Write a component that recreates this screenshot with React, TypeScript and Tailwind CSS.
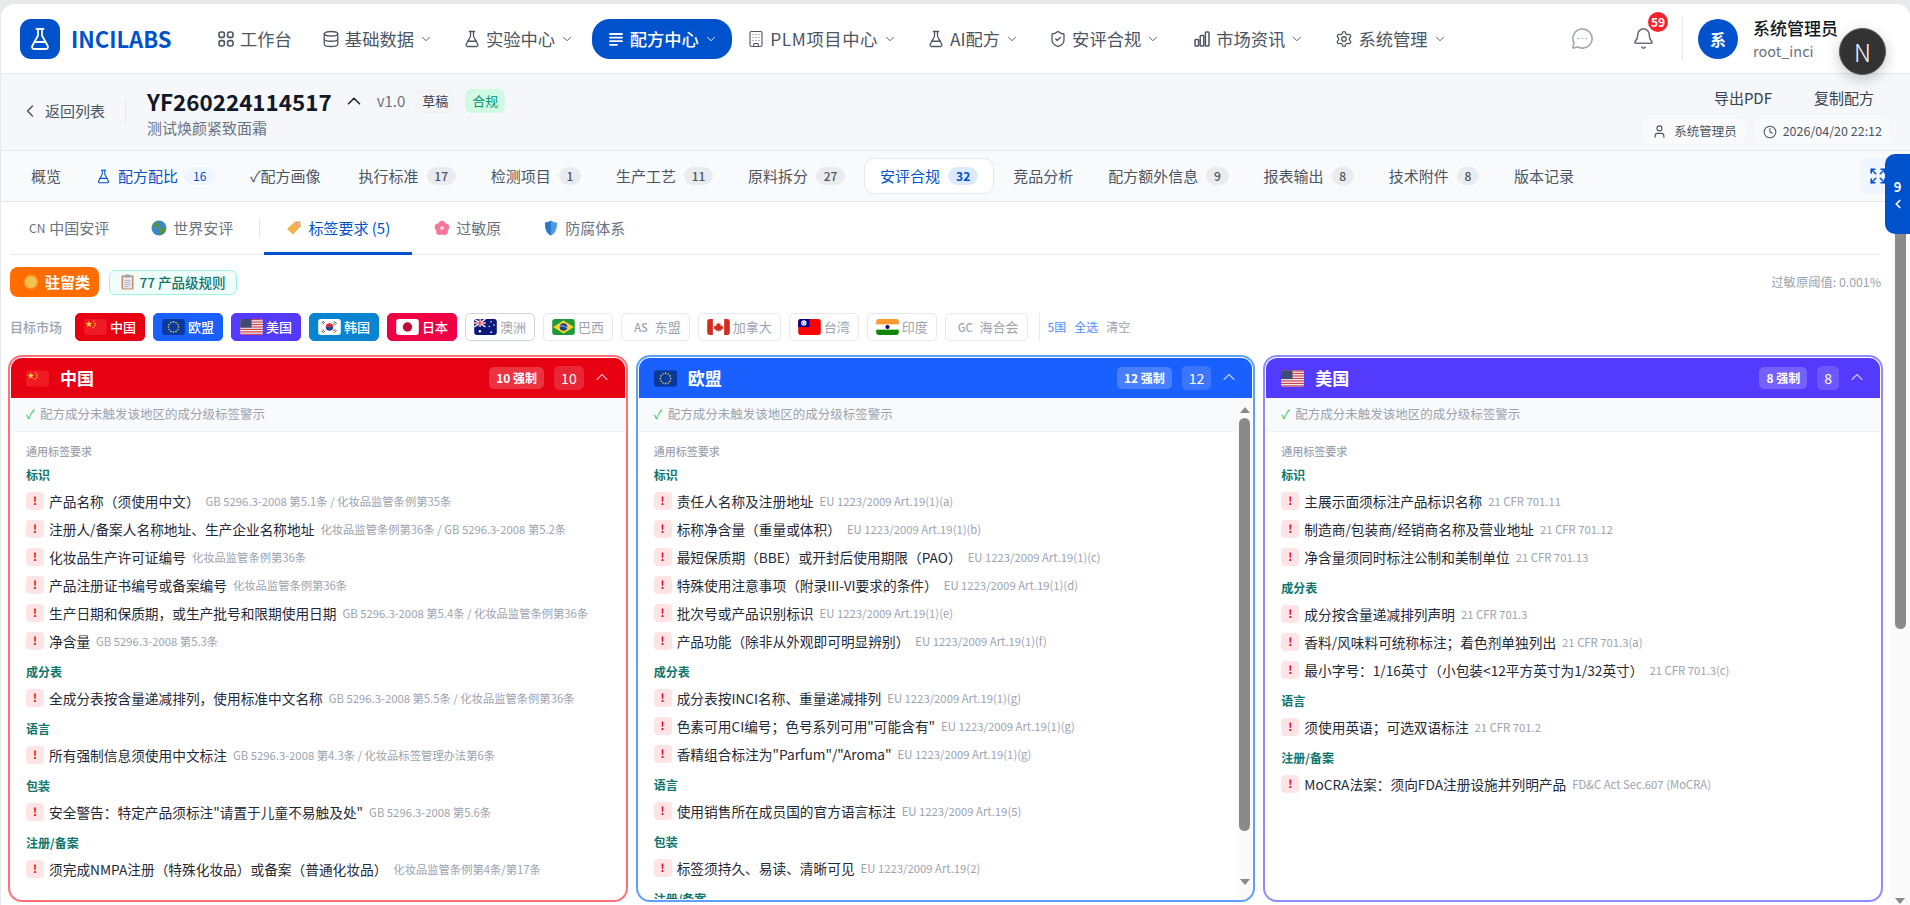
import { useState, type ReactNode } from "react";
import {
  Bell,
  Building,
  ChevronDown,
  ChevronLeft,
  ChevronUp,
  Clock,
  Database,
  Expand,
  FlaskConical,
  MessageCircleMore,
  Settings,
  ShieldCheck,
  User,
} from "lucide-react";

// small inline glyphs that the icon package has no close match for
function GridIcon() {
  return (
    <svg width="18" height="18" viewBox="0 0 18 18" fill="none" stroke="currentColor" strokeWidth="1.6">
      <rect x="2" y="2" width="5.4" height="5.4" rx="2" />
      <rect x="10.6" y="2" width="5.4" height="5.4" rx="2" />
      <rect x="2" y="10.6" width="5.4" height="5.4" rx="2" />
      <rect x="10.6" y="10.6" width="5.4" height="5.4" rx="2" />
    </svg>
  );
}

function LinesIcon() {
  return (
    <svg width="18" height="18" viewBox="0 0 18 18" fill="none" stroke="currentColor" strokeWidth="1.8" strokeLinecap="round">
      <path d="M3 4h12M3 7.6h12M3 11.2h12M3 14.8h7" />
    </svg>
  );
}

function BarsIcon() {
  return (
    <svg width="18" height="18" viewBox="0 0 18 18" fill="none" stroke="currentColor" strokeWidth="1.5" strokeLinejoin="round">
      <rect x="2" y="9.5" width="3.6" height="6.5" rx="0.8" />
      <rect x="7.2" y="5.5" width="3.6" height="10.5" rx="0.8" />
      <rect x="12.4" y="2" width="3.6" height="14" rx="0.8" />
    </svg>
  );
}

function Globe() {
  return (
    <svg width="16" height="16" viewBox="0 0 16 16">
      <circle cx="8" cy="8" r="7.5" fill="#3b88c3" />
      <path d="M3 3.5c2-1.5 4-1 5 0s0 2-1 2.5-1 2-2.5 2S2 5 3 3.5zM9 8c2-1 4-.5 5.5 1-.5 3-2.5 5-5 5.5C8 13 9.500 10 9 8z" fill="#5c913b" />
    </svg>
  );
}

function TagEmoji() {
  return (
    <svg width="16" height="16" viewBox="0 0 16 16">
      <path d="M9 1.500l5.200-.3.600 5.300-7.800 8L1 9z" fill="#f4b24d" />
      <circle cx="11.800" cy="4" r="1.500" fill="#fff" stroke="#e0736b" strokeWidth="0.8" />
    </svg>
  );
}

function FlowerEmoji() {
  return (
    <svg width="16" height="16" viewBox="0 0 16 16">
      <g fill="#f4789b">
        <circle cx="8" cy="4.200" r="3.500" />
        <circle cx="4.200" cy="7" r="3.500" />
        <circle cx="11.800" cy="7" r="3.500" />
        <circle cx="5.600" cy="11.500" r="3.500" />
        <circle cx="10.400" cy="11.500" r="3.500" />
      </g>
      <circle cx="8" cy="8" r="1.800" fill="#fde4ec" />
    </svg>
  );
}

function ShieldEmoji() {
  return (
    <svg width="16" height="16" viewBox="0 0 16 16">
      <path d="M8 .5c2 1.500 4 2 6 2 0 6-1 10.500-6 13-5-2.500-6-7-6-13 2 0 4-.5 6-2z" fill="#4e9be8" />
      <path d="M8 .5c-2 1.500-4 2-6 2 0 6 1 10.500 6 13z" fill="#2f77c9" />
    </svg>
  );
}

function SunEmoji() {
  return (
    <svg width="16" height="16" viewBox="0 0 16 16">
      <circle cx="8" cy="8" r="7.500" fill="#f59e2c" opacity="0.7" />
      <circle cx="8" cy="8" r="6" fill="#f2c14e" />
    </svg>
  );
}

function ClipEmoji() {
  return (
    <svg width="13" height="16" viewBox="0 0 13 16">
      <rect x="0.500" y="1.500" width="12" height="14" rx="1" fill="#c98a63" />
      <rect x="2" y="3" width="9" height="11.500" fill="#e6e7ee" />
      <rect x="4" y="0.500" width="5" height="3" rx="0.800" fill="#9aa3b2" />
      <path d="M3.500 6.500h6M3.500 8.500h6M3.500 10.500h6M3.500 12.500h4" stroke="#a9aebb" strokeWidth="0.800" />
    </svg>
  );
}

const flagClass = "shrink-0 rounded-[3px]";

function Flag({ code, w = 23, h = 17 }: { code: string; w?: number; h?: number }) {
  const box = { width: w, height: h, viewBox: "0 0 24 17", className: flagClass };
  switch (code) {
    case "CN":
      return (
        <svg {...box}>
          <rect width="24" height="17" fill="#f01a24" />
          <polygon points="5,2 5.900,4.600 8.500,4.600 6.400,6.200 7.200,8.800 5,7.200 2.800,8.800 3.600,6.200 1.500,4.600 4.100,4.600" fill="#ffd83d" />
          <circle cx="10" cy="2.500" r="0.800" fill="#ffd83d" />
          <circle cx="11.500" cy="4.800" r="0.800" fill="#ffd83d" />
          <circle cx="11.300" cy="7.300" r="0.800" fill="#ffd83d" />
          <circle cx="9.500" cy="9.200" r="0.800" fill="#ffd83d" />
        </svg>
      );
    case "EU":
      return (
        <svg {...box}>
          <rect width="24" height="17" fill="#073a9c" />
          {Array.from({ length: 12 }).map((_, i) => (
            <circle
              key={i}
              cx={12 + 5.400 * Math.cos((i * Math.PI) / 6)}
              cy={8.500 + 5.400 * Math.sin((i * Math.PI) / 6)}
              r="0.850"
              fill="#ffd83d"
            />
          ))}
        </svg>
      );
    case "US":
      return (
        <svg {...box}>
          <rect width="24" height="17" fill="#f5f5f5" />
          {[0, 2.600, 5.200, 7.800, 10.400, 13, 15.600].map((y) => (
            <rect key={y} y={y} width="24" height="1.300" fill="#c8414b" />
          ))}
          <rect width="12" height="9.100" fill="#3f4a75" />
        </svg>
      );
    case "KR":
      return (
        <svg {...box}>
          <rect width="24" height="17" fill="#fff" />
          <path d="M8 8.500a4 4 0 0 1 8 0z" fill="#d6293b" />
          <path d="M8 8.500a4 4 0 0 0 8 0z" fill="#1f4a9c" />
          <path d="M3.500 4.500l2.500-2.500M4.800 5.800l2.500-2.500M17 2.500l2.500 2.500M15.800 3.800l2.500 2.500M3.500 12.500l2.500 2.500M4.800 11.200l2.500 2.500M17 14.500l2.500-2.500M15.800 13.200l2.500-2.500" stroke="#222" strokeWidth="0.900" />
        </svg>
      );
    case "JP":
      return (
        <svg {...box}>
          <rect width="24" height="17" fill="#fff" />
          <circle cx="12" cy="8.500" r="5" fill="#bc0e3a" />
        </svg>
      );
    case "AU":
      return (
        <svg {...box}>
          <rect width="24" height="17" fill="#0b1a7a" />
          <rect width="12" height="8.500" fill="#1a2a8a" />
          <path d="M0 0l12 8.500M12 0L0 8.500" stroke="#fff" strokeWidth="1.400" />
          <path d="M6 0v8.500M0 4.250h12" stroke="#fff" strokeWidth="2.200" />
          <path d="M6 0v8.500M0 4.250h12" stroke="#d8293c" strokeWidth="1.100" />
          <circle cx="6" cy="13" r="1.300" fill="#fff" />
          <circle cx="18" cy="3" r="0.800" fill="#fff" />
          <circle cx="21" cy="6.500" r="0.800" fill="#fff" />
          <circle cx="16" cy="8" r="0.800" fill="#fff" />
          <circle cx="18" cy="14" r="0.900" fill="#fff" />
        </svg>
      );
    case "BR":
      return (
        <svg {...box}>
          <rect width="24" height="17" fill="#1f9a3a" />
          <polygon points="12,1.500 23,8.500 12,15.500 1,8.500" fill="#fbd52c" />
          <circle cx="12" cy="8.500" r="4" fill="#1f3f8f" />
          <path d="M8.300 7.500c2.500-.5 5.500.3 7.400 2" stroke="#fff" strokeWidth="0.700" fill="none" />
        </svg>
      );
    case "CA":
      return (
        <svg {...box}>
          <rect width="24" height="17" fill="#fff" />
          <rect width="6" height="17" fill="#d52b1e" />
          <rect x="18" width="6" height="17" fill="#d52b1e" />
          <path d="M12 3.500l1 2 1.500-.7-.5 2.700 1.500-.6.300 1.100 1.400-.2-.6 1.600.6.500-2.600 1.700.2 1-2.500-.4v2h-.6v-2l-2.500.4.200-1-2.600-1.700.6-.5-.6-1.600 1.400.2.300-1.100 1.500.6-.5-2.700 1.500.7z" fill="#d52b1e" />
        </svg>
      );
    case "TW":
      return (
        <svg {...box}>
          <rect width="24" height="17" fill="#fe0000" />
          <rect width="12" height="8.500" fill="#000095" />
          <circle cx="6" cy="4.250" r="2.800" fill="#fff" />
          <circle cx="6" cy="4.250" r="1.600" fill="#000095" />
          <circle cx="6" cy="4.250" r="1.200" fill="#fff" />
        </svg>
      );
    default:
      return (
        <svg {...box}>
          <rect width="24" height="17" fill="#fff" />
          <rect width="24" height="5.700" fill="#ff9933" />
          <rect y="11.300" width="24" height="5.700" fill="#138808" />
          <circle cx="12" cy="8.500" r="2.200" fill="#000080" />
        </svg>
      );
  }
}

const navItems: { icon: ReactNode; label: string; caret: boolean; active?: boolean; after?: string; tight?: boolean }[] = [
  { icon: <GridIcon />, label: "工作台", caret: false },
  { icon: <Database size={18} strokeWidth={1.7} />, label: "基础数据", caret: true },
  { icon: <FlaskConical size={18} strokeWidth={1.7} />, label: "实验中心", caret: true, after: "mr-[3px]" },
  { icon: <LinesIcon />, label: "配方中心", caret: true, active: true },
  { icon: <Building size={18} strokeWidth={1.5} />, label: "PLM项目中心", caret: true, tight: true },
  { icon: <FlaskConical size={18} strokeWidth={1.7} />, label: "AI配方", caret: true },
  { icon: <ShieldCheck size={18} strokeWidth={1.7} />, label: "安评合规", caret: true, after: "mr-[3px]" },
  { icon: <BarsIcon />, label: "市场资讯", caret: true, after: "mr-[1px]" },
  { icon: <Settings size={18} strokeWidth={1.7} />, label: "系统管理", caret: true },
];

const mainTabs: { label: string; count?: string; icon?: boolean; blue?: boolean; current?: boolean; wide?: boolean }[] = [
  { label: "概览" },
  { label: "配方配比", count: "16", icon: true, blue: true },
  { label: "✓配方画像", wide: true },
  { label: "执行标准", count: "17" },
  { label: "检测项目", count: "1" },
  { label: "生产工艺", count: "11" },
  { label: "原料拆分", count: "27" },
  { label: "安评合规", count: "32", current: true },
  { label: "竞品分析" },
  { label: "配方额外信息", count: "9" },
  { label: "报表输出", count: "8" },
  { label: "技术附件", count: "8" },
  { label: "版本记录" },
];

const markets: { label: string; code?: string; tag?: string; chip: string }[] = [
  { label: "中国", code: "CN", chip: "bg-[#e60012] border-[#e60012] text-white font-medium" },
  { label: "欧盟", code: "EU", chip: "bg-[#1a5fff] border-[#1a5fff] text-white font-medium" },
  { label: "美国", code: "US", chip: "bg-[#533afd] border-[#533afd] text-white font-medium" },
  { label: "韩国", code: "KR", chip: "bg-[#0984d0] border-[#0984d0] text-white font-medium" },
  { label: "日本", code: "JP", chip: "bg-[#ef0045] border-[#ef0045] text-white font-medium" },
  { label: "澳洲", code: "AU", chip: "bg-white border-[#d1d5db] text-[#9ca3af]" },
  { label: "巴西", code: "BR", chip: "bg-white border-[#e5e7eb] text-[#9ca3af]" },
  { label: "东盟", tag: "AS", chip: "bg-white border-[#e5e7eb] text-[#9ca3af]" },
  { label: "加拿大", code: "CA", chip: "bg-white border-[#e5e7eb] text-[#9ca3af]" },
  { label: "台湾", code: "TW", chip: "bg-white border-[#e5e7eb] text-[#9ca3af]" },
  { label: "印度", code: "IN", chip: "bg-white border-[#e5e7eb] text-[#9ca3af]" },
  { label: "海合会", tag: "GC", chip: "bg-white border-[#e5e7eb] text-[#9ca3af]" },
];

type Rule = [string, string];
type Section = { title: string; rules: Rule[] };

const cnRules: Section[] = [
  {
    title: "标识",
    rules: [
      ["产品名称（须使用中文）", "GB 5296.3-2008 第5.1条 / 化妆品监管条例第35条"],
      ["注册人/备案人名称地址、生产企业名称地址", "化妆品监管条例第36条 / GB 5296.3-2008 第5.2条"],
      ["化妆品生产许可证编号", "化妆品监管条例第36条"],
      ["产品注册证书编号或备案编号", "化妆品监管条例第36条"],
      ["生产日期和保质期，或生产批号和限期使用日期", "GB 5296.3-2008 第5.4条 / 化妆品监管条例第36条"],
      ["净含量", "GB 5296.3-2008 第5.3条"],
    ],
  },
  { title: "成分表", rules: [["全成分表按含量递减排列，使用标准中文名称", "GB 5296.3-2008 第5.5条 / 化妆品监管条例第36条"]] },
  { title: "语言", rules: [["所有强制信息须使用中文标注", "GB 5296.3-2008 第4.3条 / 化妆品标签管理办法第6条"]] },
  { title: "包装", rules: [['安全警告：特定产品须标注"请置于儿童不易触及处"', "GB 5296.3-2008 第5.6条"]] },
  { title: "注册/备案", rules: [["须完成NMPA注册（特殊化妆品）或备案（普通化妆品）", "化妆品监管条例第4条/第17条"]] },
];

const euRules: Section[] = [
  {
    title: "标识",
    rules: [
      ["责任人名称及注册地址", "EU 1223/2009 Art.19(1)(a)"],
      ["标称净含量（重量或体积）", "EU 1223/2009 Art.19(1)(b)"],
      ["最短保质期（BBE）或开封后使用期限（PAO）", "EU 1223/2009 Art.19(1)(c)"],
      ["特殊使用注意事项（附录III-VI要求的条件）", "EU 1223/2009 Art.19(1)(d)"],
      ["批次号或产品识别标识", "EU 1223/2009 Art.19(1)(e)"],
      ["产品功能（除非从外观即可明显辨别）", "EU 1223/2009 Art.19(1)(f)"],
    ],
  },
  {
    title: "成分表",
    rules: [
      ["成分表按INCI名称、重量递减排列", "EU 1223/2009 Art.19(1)(g)"],
      ['色素可用CI编号；色号系列可用"可能含有"', "EU 1223/2009 Art.19(1)(g)"],
      ['香精组合标注为"Parfum"/"Aroma"', "EU 1223/2009 Art.19(1)(g)"],
    ],
  },
  { title: "语言", rules: [["使用销售所在成员国的官方语言标注", "EU 1223/2009 Art.19(5)"]] },
  { title: "包装", rules: [["标签须持久、易读、清晰可见", "EU 1223/2009 Art.19(2)"]] },
  { title: "注册/备案", rules: [] },
];

const usRules: Section[] = [
  {
    title: "标识",
    rules: [
      ["主展示面须标注产品标识名称", "21 CFR 701.11"],
      ["制造商/包装商/经销商名称及营业地址", "21 CFR 701.12"],
      ["净含量须同时标注公制和美制单位", "21 CFR 701.13"],
    ],
  },
  {
    title: "成分表",
    rules: [
      ["成分按含量递减排列声明", "21 CFR 701.3"],
      ["香料/风味料可统称标注；着色剂单独列出", "21 CFR 701.3(a)"],
      ["最小字号：1/16英寸（小包装<12平方英寸为1/32英寸）", "21 CFR 701.3(c)"],
    ],
  },
  { title: "语言", rules: [["须使用英语；可选双语标注", "21 CFR 701.2"]] },
  { title: "注册/备案", rules: [["MoCRA法案：须向FDA注册设施并列明产品", "FD&C Act Sec.607 (MoCRA)"]] },
];

const regionCards = [
  { name: "中国", code: "CN", forced: "10 强制", count: "10", ring: "border-[#ff7176]", head: "bg-[#e60012]", sections: cnRules, scroll: false },
  { name: "欧盟", code: "EU", forced: "12 强制", count: "12", ring: "border-[#5ea0ff]", head: "bg-[#1a5fff]", sections: euRules, scroll: true },
  { name: "美国", code: "US", forced: "8 强制", count: "8", ring: "border-[#8f8cff]", head: "bg-[#533afd]", sections: usRules, scroll: false },
];

function Triangle({ down }: { down?: boolean }) {
  return (
    <div
      className={
        down
          ? "h-0 w-0 border-x-[5px] border-t-[6px] border-x-transparent border-t-[#8a8a8a]"
          : "h-0 w-0 border-x-[5px] border-b-[6px] border-x-transparent border-b-[#8a8a8a]"
      }
    />
  );
}

function RegionCard({ card }: { card: (typeof regionCards)[number] }) {
  return (
    <div className={`flex h-[547px] min-w-0 flex-col rounded-[14px] border-2 p-px ${card.ring}`}>
      <div className="flex min-h-0 flex-1 flex-col overflow-hidden rounded-[11px] bg-white">
        <div className={`flex h-[40px] shrink-0 items-center pl-[15px] pr-[13px] text-white ${card.head}`}>
          <Flag code={card.code} />
          <span className="ml-[11px] text-[17px] font-bold">{card.name}</span>
          <span className="ml-auto flex h-[22px] items-center rounded-[5px] bg-white/20 px-[7px] text-[12px] font-bold">{card.forced}</span>
          <span className="ml-[10px] flex h-[24px] items-center rounded-[5px] bg-white/15 px-[7px] text-[14px]">{card.count}</span>
          <ChevronUp size={20} strokeWidth={1.3} className="ml-[8px] -translate-y-px text-white/70" />
        </div>
        <div className="flex min-h-0 flex-1">
          <div className="min-w-0 flex-1 overflow-hidden">
            <div className="flex h-[34px] items-center border-b border-[#f0f2f5] bg-[#f9fafb] pl-[15px] text-[12.500px] text-[#9ca3af]">
              <span className="w-[14px] shrink-0 text-[#22c55e]">✓</span>
              <span>配方成分未触发该地区的成分级标签警示</span>
            </div>
            <div className="pl-[15px] pt-[11px]">
              <div className="mb-[7px] h-[16px] text-[11px] font-medium leading-[16px] text-[#9ca3af]">通用标签要求</div>
              <div className="flex flex-col gap-[13.500px]">
                {card.sections.map((s) => (
                  <div key={s.title}>
                    <div className="mb-[7.500px] h-[18px] text-[12px] font-bold leading-[18px] text-[#0f766e]">{s.title}</div>
                    <div className="flex flex-col gap-[10px]">
                      {s.rules.map(([text, ref]) => (
                        <div key={text} className="flex h-[18px] items-center gap-[5px] whitespace-nowrap">
                          <span className="flex h-[18px] w-[18px] shrink-0 items-center justify-center rounded-[4px] bg-[#ffe4e6] text-[11px] font-bold text-[#e60012]">!</span>
                          <span className="text-[13.700px] leading-[18px] text-[#1f2937]">{text}</span>
                          <span className="ml-px text-[11.300px] leading-[18px] text-[#9ca3af]">{ref}</span>
                        </div>
                      ))}
                    </div>
                  </div>
                ))}
              </div>
            </div>
          </div>
          {card.scroll && (
            <div className="flex w-[15px] shrink-0 flex-col items-center bg-[#fafafa] pt-[9px]">
              <Triangle />
              <div className="mt-[5px] h-[413px] w-[11px] rounded-full bg-[#8a8a8a]" />
              <div className="mt-[48px]">
                <Triangle down />
              </div>
            </div>
          )}
        </div>
      </div>
    </div>
  );
}

export default function App() {
  const [subTab] = useState("label");
  return (
    <div className="relative h-[905px] w-full overflow-hidden bg-[#e8e9eb] pl-px pt-[4px] font-['Noto_Sans_CJK_SC',sans-serif]">
      <div className="flex h-[901px] flex-col overflow-hidden rounded-t-[14px] bg-white">
        {/* top nav */}
        <header className="flex h-[70px] shrink-0 items-center border-b border-[#e5e7eb] bg-white">
          <div className="ml-[19px] flex h-[40px] w-[40px] items-center justify-center rounded-[11px] bg-[#0052cc] text-white">
            <FlaskConical size={24} strokeWidth={1.8} />
          </div>
          <span className="ml-[11px] w-[131px] text-[22px] font-bold text-[#0052cc]">INCILABS</span>
          <nav className="flex items-center">
            {navItems.map((n) => (
              <div
                key={n.label}
                className={`${
                  n.active
                    ? "flex h-[40px] items-center rounded-[18px] bg-[#0052cc] px-[14.500px] font-medium text-white"
                    : "flex h-[40px] items-center rounded-[18px] px-[15px] text-[#4b5563]"
                } ${n.after ?? ""}`}
              >
                {n.icon}
                <span className={n.tight ? "ml-[5px] text-[17.300px] tracking-[0.6px]" : "ml-[5px] text-[17.300px]"}>{n.label}</span>
                {n.caret && <ChevronDown size={14} strokeWidth={1.6} className="ml-[5px]" />}
              </div>
            ))}
          </nav>
          <MessageCircleMore size={23} strokeWidth={1.6} className="ml-auto text-[#9ca3af]" />
          <div className="relative ml-[38px]">
            <Bell size={23} strokeWidth={1.7} className="text-[#6b7280]" />
            <span className="absolute -right-[13px] -top-[15px] flex h-[20px] w-[20px] items-center justify-center rounded-full bg-[#f5222d] text-[12px] font-bold text-white">59</span>
          </div>
          <div className="ml-[27px] h-[45px] w-px bg-[#e5e7eb]" />
          <div className="ml-[15px] flex h-[40px] w-[40px] items-center justify-center rounded-full bg-[#0052cc] text-[16px] font-bold text-white">系</div>
          <div className="ml-[15px] mr-[70px] flex w-[87px] flex-col">
            <span className="text-[17px] font-medium leading-[24px] text-[#111827]">系统管理员</span>
            <span className="mt-[1px] text-[14.500px] leading-[20px] text-[#6b7280]">root_inci</span>
          </div>
        </header>

        {/* formula header */}
        <div className="flex h-[77px] shrink-0 border-b border-[#e5e7eb] bg-[#f5f7fa]">
          <div className="ml-[19px] flex items-center pb-[2px] text-[#4b5563]">
            <ChevronLeft size={20} strokeWidth={1.7} />
            <span className="ml-[5px] text-[15px]">返回列表</span>
            <div className="ml-[20px] h-[25px] w-px bg-[#e5e7eb]" />
          </div>
          <div className="ml-[21px] pt-[11px]">
            <div className="flex h-[32px] items-center">
              <span className="text-[22.400px] font-bold leading-[32px] text-[#111827]">YF260224114517</span>
              <ChevronUp size={22} strokeWidth={1.8} className="ml-[11px] text-[#1f2937]" />
              <span className="ml-[12px] text-[15px] text-[#6b7280]">v1.0</span>
              <span className="ml-[10px] flex h-[24px] w-[40px] items-center justify-center rounded-[6px] bg-[#f3f4f6] text-[13px] text-[#374151]">草稿</span>
              <span className="ml-[10px] flex h-[24px] w-[40px] items-center justify-center rounded-[6px] bg-[#d1fae5] text-[13px] text-[#059669]">合规</span>
            </div>
            <div className="mt-[1px] text-[15px] leading-[20px] text-[#6b7280]">测试焕颜紧致面霜</div>
          </div>
          <div className="ml-auto mr-[20px] flex flex-col items-end pt-[8px]">
            <div className="flex h-[32px] items-center gap-[42px] pr-[16px] text-[15px] text-[#374151]">
              <span>导出PDF</span>
              <span>复制配方</span>
            </div>
            <div className="mt-[5px] flex h-[25px] gap-[10px] text-[12.500px] text-[#4b5563]">
              <span className="flex items-center gap-[7px] rounded-[6px] bg-[#f9fafb] pl-[9px] pr-[8px]">
                <User size={15} strokeWidth={1.8} />
                系统管理员
              </span>
              <span className="flex items-center gap-[6px] rounded-[6px] bg-[#f9fafb] px-[8px]">
                <Clock size={14} strokeWidth={1.8} />
                2026/04/20 22:12
              </span>
            </div>
          </div>
        </div>

        {/* main tabs */}
        <div className="flex h-[51px] shrink-0 items-center gap-[3px] border-b border-[#e5e7eb] bg-[#f9fafb] pl-[14px]">
          {mainTabs.map((t) => (
            <div
              key={t.label}
              className={
                t.current
                  ? "flex h-[36px] items-center rounded-[10px] border border-[#e5e7eb] bg-white px-[15px] text-[15px] text-[#0052cc]"
                  : t.blue
                    ? "flex h-[36px] items-center px-[16px] text-[15px] text-[#0052cc]"
                    : t.wide
                      ? "flex h-[36px] items-center pl-[16px] pr-[19px] text-[15px] text-[#4b5563]"
                      : "flex h-[36px] items-center px-[16px] text-[15px] text-[#4b5563]"
              }
            >
              {t.icon && <FlaskConical size={15} strokeWidth={1.7} className="mr-[7px]" />}
              {t.label}
              {t.count && (
                <span
                  className={
                    t.current
                      ? "ml-[8px] flex h-[18px] min-w-[22px] items-center justify-center rounded-full bg-[#dbeafe] px-[8px] text-[12px] font-bold"
                      : t.blue
                        ? "ml-[6px] flex h-[18px] min-w-[22px] items-center justify-center rounded-full bg-[#eff6ff] px-[9px] text-[12px]"
                        : "ml-[8px] flex h-[18px] min-w-[22px] items-center justify-center rounded-full bg-[#e9ebee] px-[7.700px] text-[12px] font-medium text-[#4b5563]"
                  }
                >
                  {t.count}
                </span>
              )}
            </div>
          ))}
          <div className="ml-auto mr-[14px] flex h-[36px] w-[36px] items-center justify-center rounded-[8px] bg-[#eff6ff] text-[#0052cc]">
            <Expand size={18} strokeWidth={2} />
          </div>
        </div>

        {/* scrolling body */}
        <div className="flex min-h-0 flex-1">
          <div className="min-w-0 flex-1 pl-[7px] pr-[8px]">
            <div className="mr-[3px] ml-[2px] flex h-[53px] items-center border-b border-[#e5e7eb] text-[15px] text-[#6b7280]">
              <div className="flex h-full items-center pl-[19px] pr-[20px]">
                <span className="mr-[4px] text-[12px]">CN</span>中国安评
              </div>
              <div className="flex h-full items-center gap-[6px] px-[22px]">
                <Globe />
                世界安评
              </div>
              <div className="mx-[4px] h-[20px] w-px bg-[#e5e7eb]" />
              <div className={subTab === "label" ? "flex h-[53px] items-center gap-[6px] border-b-[3px] border-[#0052cc] px-[22px] pt-[3px] text-[#0052cc]" : "flex items-center gap-[6px] px-[22px]"}>
                <TagEmoji />
                标签要求 (5)
              </div>
              <div className="flex h-full items-center gap-[6px] pl-[22px] pr-[20px]">
                <FlowerEmoji />
                过敏原
              </div>
              <div className="flex h-full items-center gap-[6px] px-[22px]">
                <ShieldEmoji />
                防腐体系
              </div>
            </div>

            <div className="ml-[2px] mr-[2px] mt-[12px] flex h-[30px] items-center">
              <div className="flex h-[30px] w-[89px] items-center gap-[6px] rounded-[8px] bg-[#ff6d00] pl-[13px] text-[15px] font-bold text-white">
                <SunEmoji />
                驻留类
              </div>
              <div className="ml-[10px] flex h-[25px] items-center gap-[6px] rounded-[6px] border border-[#99f6e4] bg-[#f0fdfa] px-[10.500px] text-[13.500px] font-medium text-[#0f766e]">
                <ClipEmoji />
                77 产品级规则
              </div>
              <span className="ml-auto text-[12.300px] text-[#9ca3af]">过敏原阈值: 0.001%</span>
            </div>

            <div className="ml-[2px] mt-[16px] flex h-[28px] items-center gap-[8px]">
              <span className="mr-[5px] text-[13px] font-medium text-[#9ca3af]">目标市场</span>
              {markets.map((m) => (
                <div key={m.label} className={`flex h-[28px] items-center gap-[3px] rounded-[5px] border px-[8px] text-[13px] ${m.chip}`}>
                  {m.code ? <Flag code={m.code} h={16} /> : <span className="px-[4px] text-[11px] font-medium">{m.tag}</span>}
                  {m.label}
                </div>
              ))}
              <div className="ml-[3px] h-[28px] w-px bg-[#fde2e2]" />
              <span className="text-[12px] text-[#4d8dff]">5国</span>
              <span className="text-[12px] text-[#4d8dff]">全选</span>
              <span className="text-[12px] text-[#9ca3af]">清空</span>
            </div>

            <div className="mt-[14px] grid grid-cols-3 gap-[8px]">
              {regionCards.map((c) => (
                <RegionCard key={c.name} card={c} />
              ))}
            </div>
          </div>

          {/* page scrollbar */}
          <div className="flex w-[19px] shrink-0 flex-col items-center bg-[#fafafa] pr-[1px]">
            <div className="mt-[10px] h-[417px] w-[11px] rounded-full bg-[#8a8a8a]" />
            <div className="mt-auto mb-[1px]">
              <Triangle down />
            </div>
          </div>
        </div>
      </div>

      {/* floating overlays */}
      <div className="absolute left-[1885px] top-[154px] flex h-[80px] w-[25px] flex-col items-center justify-center gap-[1px] rounded-l-[10px] bg-[#0052cc] text-white">
        <span className="text-[13px] font-bold">9</span>
        <ChevronLeft size={14} strokeWidth={3} />
      </div>
      <div className="absolute left-[1839px] top-[28px] flex h-[47px] w-[47px] items-center justify-center rounded-full border border-[#555] bg-[#333] text-[24px] font-light text-white shadow-[0_4px_14px_rgba(0,0,0,0.22)]">N</div>
    </div>
  );
}
